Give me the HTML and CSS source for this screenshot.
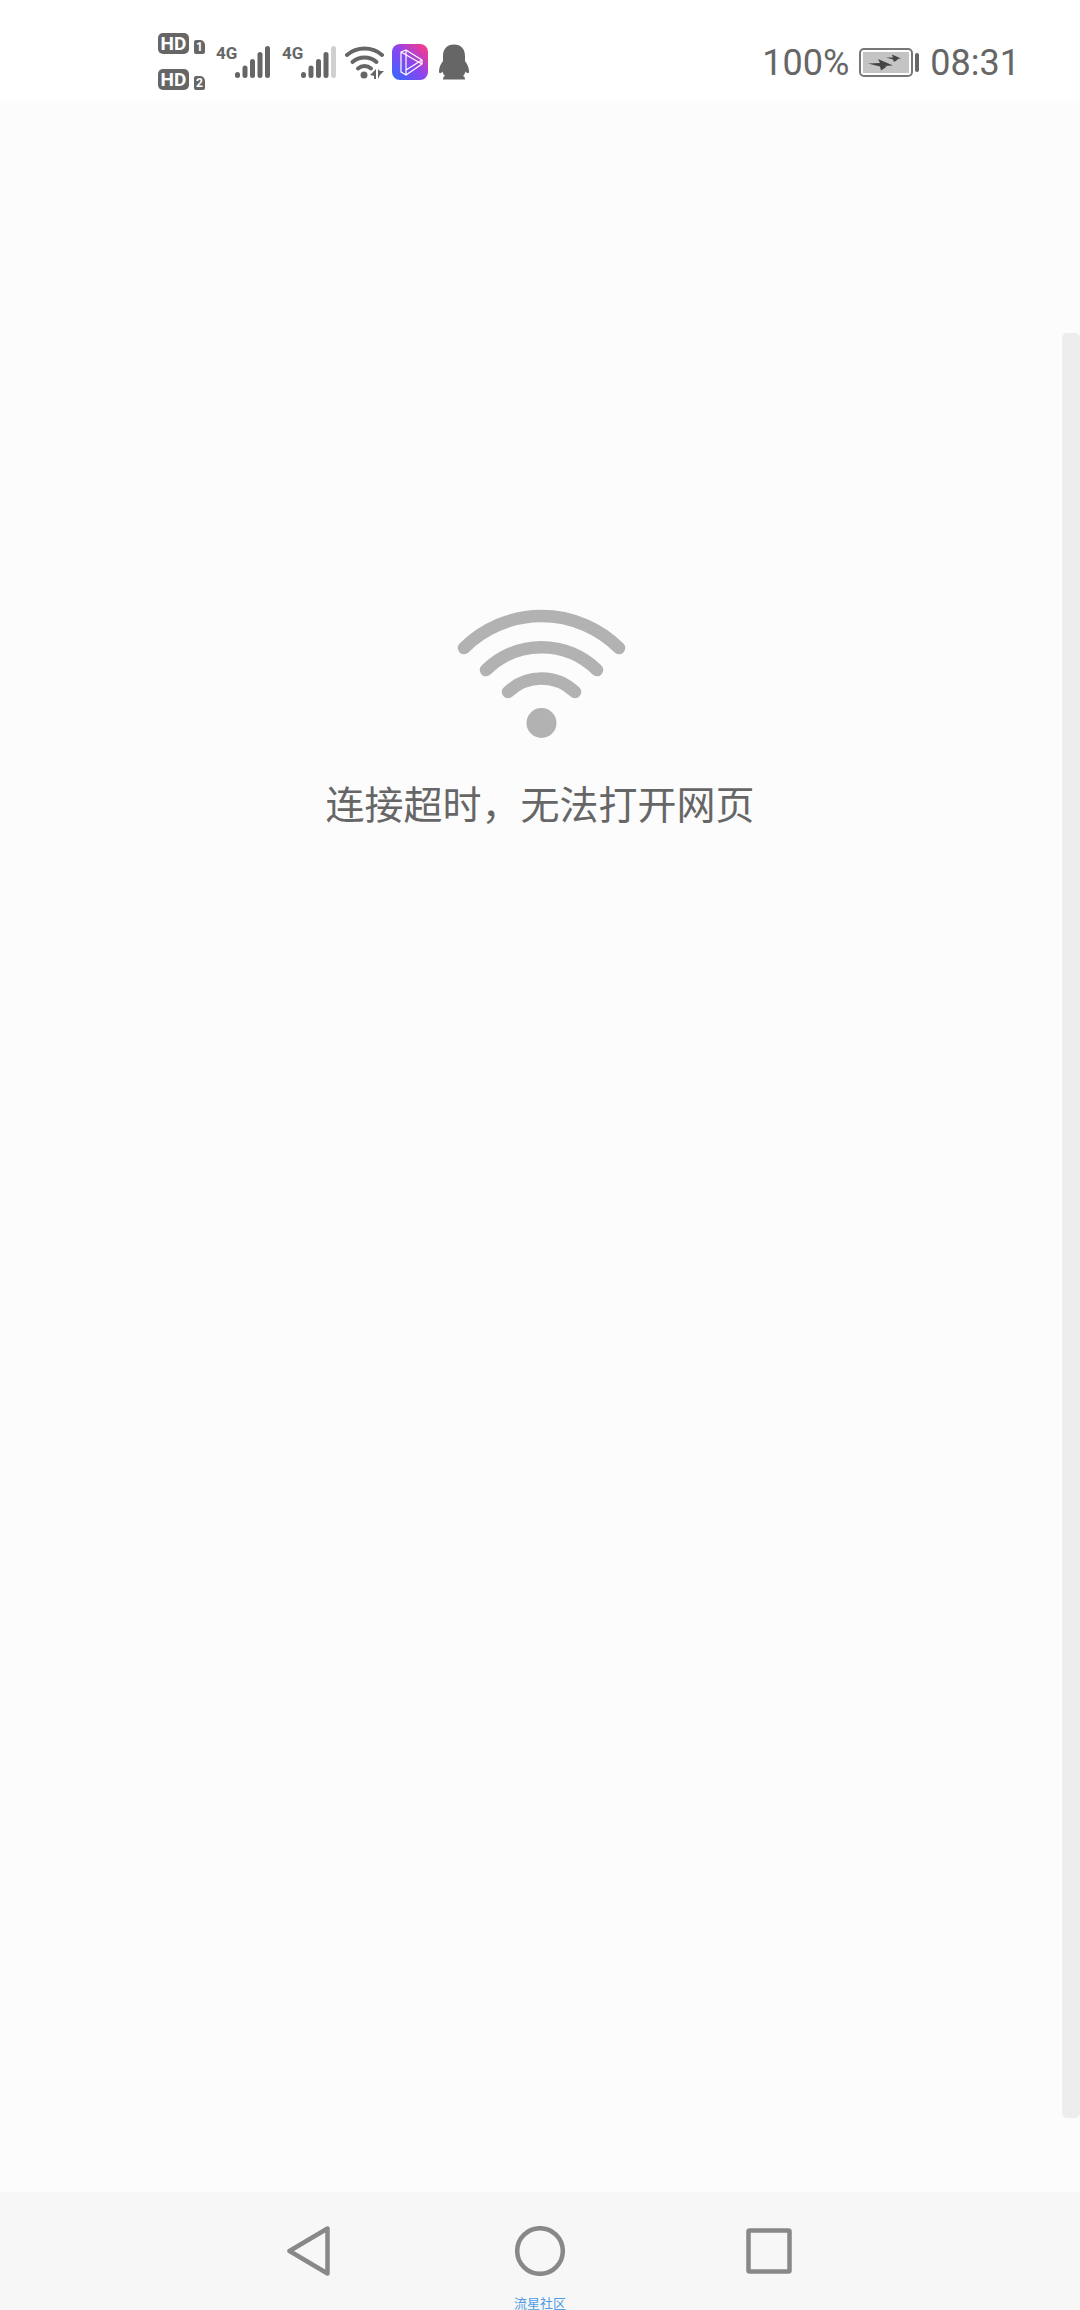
FILE: index.html
```html
<!DOCTYPE html>
<html lang="zh-CN">
<head>
    <meta charset="UTF-8">
    <meta name="viewport" content="width=device-width, initial-scale=1.0">
    <title>无法打开网页</title>
    <link rel="stylesheet" href="styles.css">
</head>
<body>
    <header class="status-bar">
        <div class="status-left">
            <div class="sim-list">
                <div class="sim-row"><span class="hd">HD</span><span class="sim">1</span></div>
                <div class="sim-row"><span class="hd">HD</span><span class="sim">2</span></div>
            </div>
            <div class="signal">
                <span class="network">4G</span>
                <svg width="36" height="34" viewBox="0 0 36 34" fill="none" stroke="#666" stroke-width="5" stroke-linecap="round">
                    <path d="M2.5 29.5v1M10 23v7.500M17.500 16.500v14M25 9.500v21M32.500 3.500v27"/>
                </svg>
            </div>
            <div class="signal">
                <span class="network">4G</span>
                <svg width="36" height="34" viewBox="0 0 36 34" fill="none" stroke="#666" stroke-width="5" stroke-linecap="round">
                    <path d="M2.5 29.5v1M10 23v7.500M17.500 16.500v14M25 9.500v21"/>
                    <path d="M32.500 3.500v27" stroke="#d0d0d0"/>
                </svg>
            </div>
            <svg class="wifi-small" width="39" height="34" viewBox="0 0 39 34">
                <g fill="none" stroke="#666" stroke-width="4" stroke-linecap="round">
                    <path d="M2 10A27 27 0 0 1 37 10"/>
                    <path d="M7.500 17A18 18 0 0 1 31.500 17"/>
                    <path d="M13 23.500A10 10 0 0 1 26 23.500"/>
                </g>
                <circle cx="19" cy="30" r="3.500" fill="#666"/>
                <path d="M25 30l6-6v10h-2v-3zM33 24v10l2-4 4-4h-4z" fill="#666"/>
            </svg>
            <svg class="app-icon" width="36" height="36" viewBox="0 0 36 36">
                <defs>
                    <linearGradient id="app-bg" x1="0" y1="1" x2="1" y2="0">
                        <stop offset="0" stop-color="#2f6bff"/>
                        <stop offset="0.500" stop-color="#8a45f0"/>
                        <stop offset="0.850" stop-color="#e83a9c"/>
                        <stop offset="1" stop-color="#f0438a"/>
                    </linearGradient>
                </defs>
                <rect width="36" height="36" rx="8" fill="url(#app-bg)"/>
                <path d="M9 8l5-2 16 10v4L14 31l-5-3zM14 6v25M9 8l21 12M14 26l16-10" fill="none" stroke="#fff" stroke-width="1.200" stroke-linejoin="round"/>
            </svg>
            <svg width="30" height="36" viewBox="0 0 30 36" fill="#666">
                <path d="M15 0.500C8 0.500 4 5 4 12v5C1.500 20 0 24 0 27.500c0 2.500 2 2 3.500 0 .5 2 1.500 3.500 2.500 4.500-1.500.5-2 1.500-2 3.500h22c0-2-.5-3-2-3.500 1-1 2-2.500 2.500-4.500 1.500 2 3.500 2.500 3.500 0 0-3.500-1.500-7.500-4-10.500v-5C26 5 22 .500 15 .500z"/>
            </svg>
        </div>
        <div class="status-right">
            <span>100%</span>
            <svg width="61" height="30" viewBox="0 0 61 30">
                <rect x="1" y="1" width="52" height="27" rx="4" fill="#fff" stroke="#777" stroke-width="2"/>
                <rect x="4" y="4" width="46" height="21" fill="#c4c4c4"/>
                <path d="M9 15.500l12-.5-2-4 15 6.500-9 .5 3 .5-6 4-1-4zM27 9.500l7 0-1-3 9 4-4 .5 1 .5-4 2.500-1-2.500z" fill="#444"/>
                <rect x="56" y="5" width="4" height="19" rx="2" fill="#666"/>
            </svg>
            <time>08:31</time>
        </div>
    </header>

    <main class="page">
        <svg width="172" height="130" viewBox="0 0 172 130">
            <g fill="none" stroke="#b2b2b2" stroke-width="12.500" stroke-linecap="round">
                <path d="M10 39A110 110 0 0 1 165 39"/>
                <path d="M32 61A79 79 0 0 1 143 61"/>
                <path d="M54 83A48 48 0 0 1 121 83"/>
            </g>
            <circle cx="87.500" cy="114" r="15" fill="#b2b2b2"/>
        </svg>
        <p class="message">连接超时，无法打开网页</p>
        <div class="scroll-thumb"></div>
    </main>

    <nav class="nav-bar">
        <button type="button" aria-label="返回">
            <svg width="50" height="50" viewBox="0 0 50 50"><path d="M4.500 25L42.500 2.500v45z"/></svg>
        </button>
        <button type="button" aria-label="主页">
            <svg width="50" height="50" viewBox="0 0 50 50"><circle cx="25" cy="25" r="22.800"/></svg>
        </button>
        <button type="button" aria-label="最近任务">
            <svg width="50" height="50" viewBox="0 0 50 50"><rect x="3.500" y="4.500" width="41" height="41" rx="1"/></svg>
        </button>
        <span class="watermark">流星社区</span>
    </nav>
</body>
</html>
```
FILE: styles.css
```css
* {
    box-sizing: border-box;
}

body {
    margin: 0;
    min-height: 100vh;
    display: flex;
    flex-direction: column;
    background-color: #fcfcfc;
    color: #666;
    font-family: Roboto, "Noto Sans CJK SC", sans-serif;
}

svg {
    display: block;
    flex-shrink: 0;
}

.status-bar {
    height: 101px;
    padding: 22px 60px 0 158px;
    display: flex;
    justify-content: space-between;
    align-items: center;
    background-color: #fff;
}

.status-left,
.status-right {
    display: flex;
    align-items: center;
}

.status-left {
    gap: 11px;
}

.status-right {
    gap: 10px;
    padding-top: 2px;
    font-size: 36px;
    line-height: 36px;
}

.sim-list {
    display: flex;
    flex-direction: column;
    gap: 15px;
}

.sim-row {
    display: flex;
    align-items: flex-end;
    gap: 5px;
}

.hd,
.sim {
    background-color: #666;
    color: #fff;
    font-weight: 700;
    text-align: center;
}

.hd {
    width: 31px;
    height: 21px;
    border-radius: 5px;
    font-size: 19px;
    line-height: 21px;
}

.sim {
    width: 11px;
    height: 14px;
    border-radius: 2px 5px 2px 2px;
    font-size: 12px;
    line-height: 14px;
}

.signal {
    display: flex;
    align-items: flex-start;
}

.network {
    width: 19px;
    font-size: 17px;
    font-weight: 700;
    line-height: 17px;
}

.wifi-small,
.app-icon {
    margin-left: -3px;
}

.page {
    position: relative;
    flex: 1;
    display: flex;
    flex-direction: column;
    align-items: center;
    padding-top: 508px;
}

.message {
    margin: 39px 0 0;
    font-size: 39px;
    line-height: 56px;
}

.scroll-thumb {
    position: absolute;
    top: 232px;
    right: 0;
    bottom: 74px;
    width: 18px;
    border-radius: 5px;
    background-color: #ededed;
}

.nav-bar {
    position: relative;
    height: 118px;
    display: flex;
    justify-content: center;
    align-items: center;
    gap: 180px;
    background-color: #f7f7f7;
}

.nav-bar button {
    padding: 0;
    border: none;
    background: none;
    cursor: pointer;
}

.nav-bar svg {
    fill: none;
    stroke: #888;
    stroke-width: 4.5;
    stroke-linejoin: round;
}

.watermark {
    position: absolute;
    bottom: 0;
    left: 0;
    right: 0;
    text-align: center;
    font-size: 13px;
    line-height: 13px;
    color: #4f9be6;
}
```
